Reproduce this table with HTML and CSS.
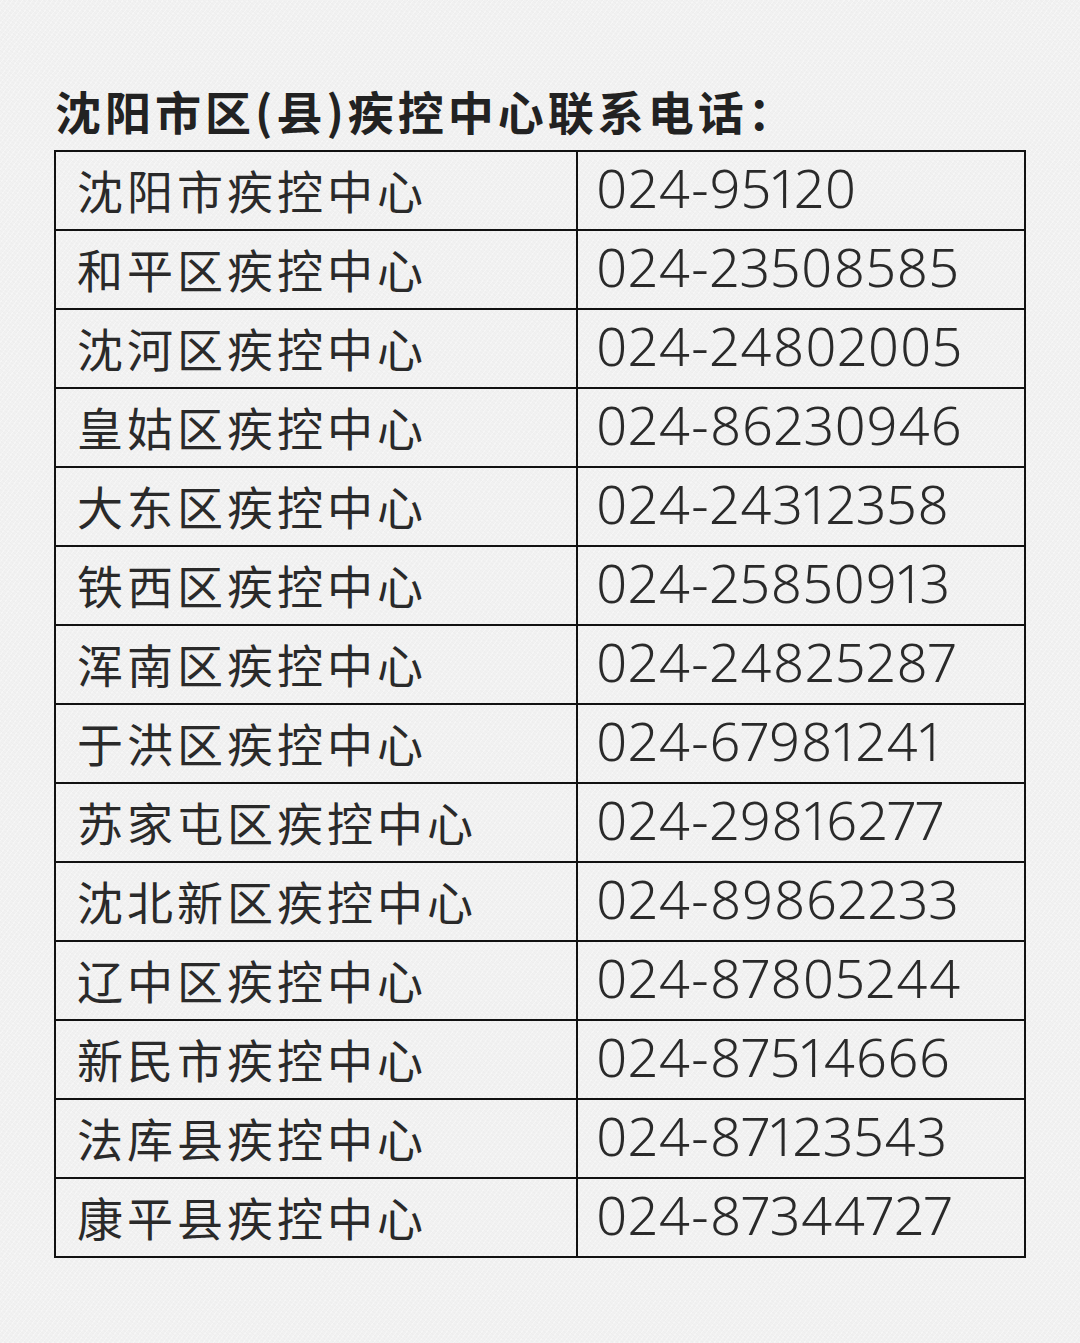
FILE: index.html
```html
<!DOCTYPE html>
<html lang="zh-CN">
<head>
<meta charset="utf-8">
<title>沈阳市区(县)疾控中心联系电话</title>
<link rel="stylesheet" href="styles.css">
</head>
<body>
<main class="page">
  <h1 class="title">沈阳市区(县)疾控中心联系电话：</h1>
  <div class="table">
    <div class="cell name">沈阳市疾控中心</div><div class="cell phone">024-95120</div>
    <div class="cell name">和平区疾控中心</div><div class="cell phone">024-23508585</div>
    <div class="cell name">沈河区疾控中心</div><div class="cell phone">024-24802005</div>
    <div class="cell name">皇姑区疾控中心</div><div class="cell phone">024-86230946</div>
    <div class="cell name">大东区疾控中心</div><div class="cell phone">024-24312358</div>
    <div class="cell name">铁西区疾控中心</div><div class="cell phone">024-25850913</div>
    <div class="cell name">浑南区疾控中心</div><div class="cell phone">024-24825287</div>
    <div class="cell name">于洪区疾控中心</div><div class="cell phone">024-67981241</div>
    <div class="cell name">苏家屯区疾控中心</div><div class="cell phone">024-29816277</div>
    <div class="cell name">沈北新区疾控中心</div><div class="cell phone">024-89862233</div>
    <div class="cell name">辽中区疾控中心</div><div class="cell phone">024-87805244</div>
    <div class="cell name">新民市疾控中心</div><div class="cell phone">024-87514666</div>
    <div class="cell name">法库县疾控中心</div><div class="cell phone">024-87123543</div>
    <div class="cell name">康平县疾控中心</div><div class="cell phone">024-87344727</div>
  </div>
</main>
</body>
</html>
```

FILE: styles.css
```css
html, body {
  margin: 0;
  padding: 0;
  background: #f1f1f1;
}

.page {
  width: 1080px;
  height: 1343px;
  box-sizing: border-box;
  padding: 87px 0 0 55px;
  background-color: #f1f1f1;
  background-image:
    repeating-linear-gradient(37deg, rgba(0,0,0,0.012) 0 1px, transparent 1px 3px),
    repeating-linear-gradient(-53deg, rgba(255,255,255,0.35) 0 1px, transparent 1px 4px);
}

.title {
  margin: 0 0 17px 0;
  font-family: "Noto Sans CJK SC", sans-serif;
  font-weight: 700;
  font-size: 46px;
  line-height: 46px;
  letter-spacing: 4px;
  color: #222222;
  white-space: nowrap;
}

.table {
  display: grid;
  grid-template-columns: 522px 448px;
  width: 972px;
  margin-left: -1px;
  box-sizing: border-box;
  border-top: 2px solid #111111;
  border-left: 2px solid #111111;
}

.cell {
  box-sizing: border-box;
  height: 79px;
  border-right: 2px solid #111111;
  border-bottom: 2px solid #111111;
  display: flex;
  align-items: center;
  color: #2a2a2a;
  white-space: nowrap;
}

.name {
  padding-left: 21px;
  padding-bottom: 3px;
  font-family: "Noto Sans CJK SC", sans-serif;
  font-size: 46px;
  letter-spacing: 4px;
  line-height: 1;
}

.phone {
  padding-left: 18px;
  padding-bottom: 7px;
  font-family: "Noto Sans", "Noto Sans CJK SC", sans-serif;
  font-weight: 350;
  font-size: 54px;
  letter-spacing: 1px;
  font-variant-numeric: proportional-nums;
  line-height: 1;
}
```
